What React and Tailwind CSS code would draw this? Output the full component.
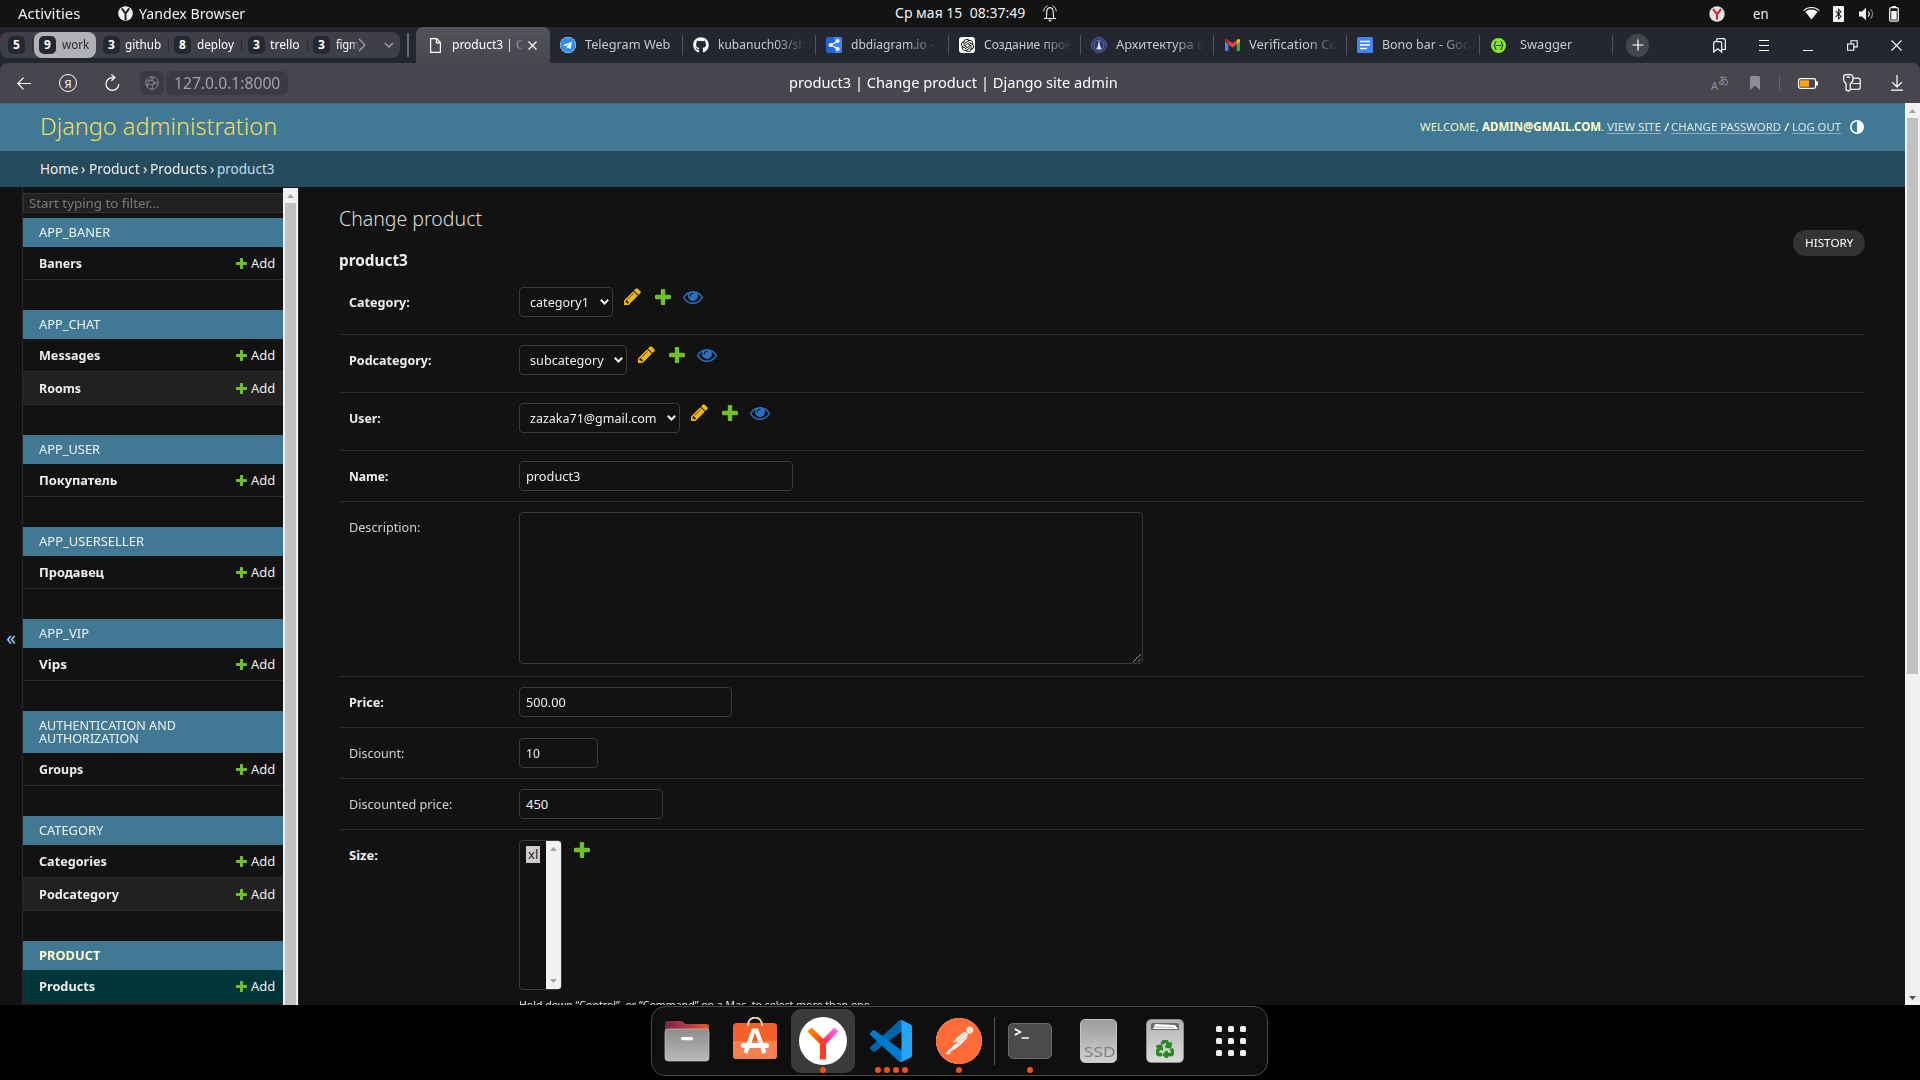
import React, { useLayoutEffect, useRef, useState } from "react";
import { FaGithub, FaRecycle, FaTelegram, FaBluetoothB } from "react-icons/fa";
import { SiOpenai, SiPostman } from "react-icons/si";

/* One line of text squeezed or stretched to an exact width. */
function Fit({ w, className = "", children }) {
  const ref = useRef(null);
  const [k, setK] = useState(1);
  useLayoutEffect(() => {
    const n = ref.current.offsetWidth;
    if (n) setK(w / n);
  }, [w]);
  return (
    <span className={"inline-block shrink-0 whitespace-pre " + className} style={{ width: w }}>
      <span ref={ref} className="inline-block origin-left" style={{ transform: `scaleX(${k})` }}>
        {children}
      </span>
    </span>
  );
}

/* ---------- desktop top bar ---------- */
function TopBar() {
  return (
    <div className="flex h-[27px] items-center bg-[#131313] text-[14px] text-[#f2f2f2]">
      <Fit w={62} className="ml-[18px]">Activities</Fit>
      <svg className="ml-[38px] shrink-0" width="15" height="15" viewBox="0 0 15 15">
        <circle cx="7.5" cy="7.5" r="7.3" fill="#f2f2f2" />
        <path d="M3.8 2.4 7.5 7.6 11.2 2.4M7.5 7v7" stroke="#222" strokeWidth="2" fill="none" />
      </svg>
      <Fit w={106} className="ml-[6px]">Yandex Browser</Fit>
      <Fit w={130} className="ml-[650px] pb-[2px]">{"Ср мая 15  08:37:49"}</Fit>
      <svg className="mb-px ml-[18px] shrink-0" width="14" height="17" viewBox="0 0 14 17" fill="none" stroke="#f2f2f2" strokeWidth="1.1">
        <path d="M1 13.500h12M3 13.300C4 11 3.400 8 4 5.500 4.500 3.200 5.500 2.600 7 2.600s2.500.600 3 2.900c.600 2.500 0 5.500 1 7.800" />
        <path d="M.800 6.500C.800 4 2 2 4.500.700M13.200 6.500c0-2.500-1.200-4.500-3.700-5.800" strokeWidth=".9" />
        <path d="M5.200 14.800h3.600L7 16.900z" fill="#f2f2f2" stroke="none" />
      </svg>
      <svg className="ml-[652px] shrink-0" width="16" height="16" viewBox="0 0 16 16">
        <circle cx="8" cy="8" r="7.7" fill="#e4e4e4" />
        <path d="M4 3.2 8 8.2l4-5M8 8v5.6" stroke="#d01c1c" strokeWidth="1.9" fill="none" />
      </svg>
      <Fit w={16} className="ml-[28px]">en</Fit>
      <svg className="ml-[34px] shrink-0" width="17" height="13" viewBox="0 0 17 13">
        <path d="M.6 3.6a11.5 11.5 0 0 1 15.8 0" fill="none" stroke="#f2f2f2" strokeWidth="1.1" />
        <path d="M2.3 4.8a9.5 9.5 0 0 1 12.4 0L8.5 12.5z" fill="#f2f2f2" />
      </svg>
      <span className="ml-[13px] flex h-4 w-[11px] shrink-0 items-center justify-center rounded-[1px] bg-[#f2f2f2] text-[12px] text-[#131313]">
        <FaBluetoothB />
      </span>
      <svg className="ml-[15px] shrink-0" width="16" height="14" viewBox="0 0 16 14">
        <path d="M0 4.5h3L7 .8v12.4L3 9.5H0z" fill="#f2f2f2" />
        <path d="M9.2 4.4a4 4 0 0 1 0 5.2" fill="none" stroke="#f2f2f2" strokeWidth="1.1" />
        <path d="M11.6 2.2a7 7 0 0 1 0 9.6" fill="none" stroke="#8a8a8a" strokeWidth="1.1" />
      </svg>
      <svg className="ml-[14px] shrink-0" width="10" height="16" viewBox="0 0 10 16">
        <rect x="3" y="0" width="4" height="2" fill="#f2f2f2" />
        <rect x=".7" y="1.7" width="8.6" height="13.4" rx="1.4" fill="none" stroke="#f2f2f2" strokeWidth="1.3" />
        <rect x="2.3" y="5" width="5.4" height="8.6" fill="#f2f2f2" />
      </svg>
    </div>
  );
}

/* ---------- tab strip ---------- */
function Chip({ children, className }) {
  return (
    <span className={"flex h-[18px] w-[17px] shrink-0 items-center justify-center rounded-[5px] bg-[#262830] text-[12px] font-bold text-white " + className}>
      {children}
    </span>
  );
}
const Bar = ({ className }) => <span className={"h-[14px] w-px shrink-0 bg-[#2b2c34] " + className} />;
const FADE = "[mask-image:linear-gradient(to_right,#000_65%,transparent)]";

const ICONS = {
  telegram: (
    <span className="h-4 w-4 overflow-hidden rounded-full bg-white text-[16px] text-[#2f8fee]"><FaTelegram /></span>
  ),
  github: <FaGithub className="text-[16px] text-white" />,
  db: (
    <svg width="16" height="16" viewBox="0 0 16 16">
      <rect width="16" height="16" rx="2" fill="#2264dc" />
      <path d="M8 0h6a2 2 0 0 1 2 2v12a2 2 0 0 1-2 2H9z" fill="#3d84f5" />
      <path d="M12 4 5 8l7 4" stroke="#fff" fill="none" strokeWidth="1.4" />
      <circle cx="4.6" cy="8" r="2" fill="#fff" /><circle cx="11.6" cy="4" r="1.9" fill="#fff" /><circle cx="11.6" cy="12" r="1.9" fill="#fff" />
    </svg>
  ),
  openai: (
    <span className="flex h-4 w-4 items-center justify-center rounded-[3px] bg-white text-[13px] text-black"><SiOpenai /></span>
  ),
  arch: (
    <svg width="16" height="16" viewBox="0 0 16 16">
      <circle cx="8" cy="8" r="7.4" fill="#27356f" stroke="#5567a8" />
      <circle cx="8" cy="8" r="5" fill="none" stroke="#7c8ac0" strokeWidth=".7" />
      <path d="M8 2.6 9 8.4l1.6 3.8H5.4L7 8.4z" fill="#e8ecf8" />
    </svg>
  ),
  gmail: (
    <svg width="15" height="12" viewBox="0 0 15 12">
      <path d="M0 2v9a1 1 0 0 0 1 1h2.4V4.5z" fill="#4285f4" />
      <path d="M15 2v9a1 1 0 0 1-1 1h-2.4V4.5z" fill="#34a853" />
      <path d="M11.6 1.2V5.6L15 3V1.5C15 0 13.4 -.4 12.4.5z" fill="#fbbc04" />
      <path d="M3.4 1.2 7.5 4.3l4.1-3.1v4.4L7.5 8.7 3.4 5.6z" fill="#ea4335" />
      <path d="M0 1.5V3l3.4 2.6V1.2L2.6.5C1.5-.4 0 .2 0 1.5z" fill="#c5221f" />
    </svg>
  ),
  docs: (
    <svg width="16" height="16" viewBox="0 0 16 16">
      <rect width="16" height="16" rx="1.5" fill="#4285f4" />
      <path d="M3 4.5h10M3 8h10M3 11.5h7" stroke="#fff" strokeWidth="1.7" />
    </svg>
  ),
  swagger: (
    <svg width="15" height="15" viewBox="0 0 15 15">
      <circle cx="7.5" cy="7.5" r="7.5" fill="#85ea2d" />
      <path d="M5.6 3.6c-1.600 0-1.500.700-1.500 1.700 0 1.200 0 2-1.300 2.200 1.300.200 1.300 1 1.300 2.200 0 1-.100 1.700 1.500 1.700M9.400 3.600c1.600 0 1.500.700 1.500 1.700 0 1.200 0 2 1.300 2.200-1.300.200-1.300 1-1.300 2.200 0 1 .100 1.700-1.500 1.700M5.200 7.500h4.800" fill="none" stroke="#1c3a1a" strokeWidth="1.1" />
    </svg>
  ),
};

const TABS = [
  ["telegram", "Telegram Web", 85, "w-[133px]", false],
  ["github", "kubanuch03/sh", 88, "w-[133px]", true],
  ["db", "dbdiagram.io - ", 86, "w-[133px]", true],
  ["openai", "Создание прое", 88, "w-[132px]", true],
  ["arch", "Архитектура в", 88, "w-[133px]", true],
  ["gmail", "Verification Co", 88, "w-[133px]", true],
  ["docs", "Bono bar - Goo", 88, "w-[133px]", true],
  ["swagger", "Swagger", 52, "w-[133px]", false],
];

function TabStrip() {
  return (
    <div className="flex h-[36px] items-center bg-[#252730] text-[13px] text-[#c9c9cd]">
      <div className="flex h-[26px] w-[400px] shrink-0 items-center rounded-[8px] bg-[#3f3f4a] text-white">
        <Chip className="ml-[8px]">5</Chip>
        <Bar className="ml-[7px]" />
        <div className="ml-px flex h-[26px] w-[62px] shrink-0 items-center rounded-[8px] bg-[#b0b0b5] text-[#2b2b31]">
          <Chip className="ml-[5px]">9</Chip>
          <Fit w={27} className="ml-[6px]">work</Fit>
        </div>
        <Chip className="ml-[7px]">3</Chip>
        <Fit w={36} className="ml-[5px]">github</Fit>
        <Bar className="ml-[7px]" />
        <Chip className="ml-[5px]">8</Chip>
        <Fit w={37} className="ml-[6px]">deploy</Fit>
        <Bar className="ml-[7px]" />
        <Chip className="ml-[6px]">3</Chip>
        <Fit w={30} className="ml-[5px]">trello</Fit>
        <Bar className="ml-[7px]" />
        <Chip className="ml-[5px]">3</Chip>
        <Fit w={23} className={"ml-[6px] " + FADE}>figm</Fit>
        <svg className="-ml-px shrink-0" width="9" height="14" viewBox="0 0 9 14" fill="none" stroke="#a5a5ad" strokeWidth="1.2"><path d="m1 1 6 6-6 6" /></svg>
        <svg className="ml-[17px] shrink-0" width="10" height="6" viewBox="0 0 10 6" fill="none" stroke="#a5a5ad" strokeWidth="1.3"><path d="m1 1 4 4 4-4" /></svg>
      </div>
      <span className="ml-[7px] h-6 w-[2px] shrink-0 bg-[#66676f]" />
      <div className="ml-[7px] flex h-[36px] w-[134px] shrink-0 items-center rounded-t-[7px] bg-gradient-to-b from-[#53535c] to-[#47464f] text-white">
        <svg className="ml-[14px] shrink-0" width="11" height="15" viewBox="0 0 11 15" fill="none" stroke="#fff" strokeWidth="1.2"><path d="M.6.6h6L10.4 4.6v9.7H.6zM6.5.6v4.2h4" /></svg>
        <Fit w={72} className={"ml-[11px] [mask-image:linear-gradient(to_right,#000_78%,transparent)]"}>product3 | C</Fit>
        <svg className="ml-[4px] shrink-0" width="9" height="9" viewBox="0 0 9 9" stroke="#fff" strokeWidth="1.2"><path d="m.5.5 8 8m0-8-8 8" /></svg>
      </div>
      {TABS.map(([icon, label, w, cls, fade]) => (
        <div key={label} className={"flex h-[20px] shrink-0 items-center border-r border-[#50515a] " + cls}>
          <span className="ml-[10px] flex w-[16px] shrink-0 items-center justify-center">{ICONS[icon]}</span>
          <Fit w={w} className={(icon === "swagger" ? "ml-[14px] " : "ml-[9px] ") + (fade ? FADE : "")}>{label}</Fit>
        </div>
      ))}
      <span className="ml-[13px] flex h-[23px] w-[23px] shrink-0 items-center justify-center rounded-full bg-[#45454e]">
        <svg width="12" height="12" viewBox="0 0 12 12" stroke="#fff" strokeWidth="1.2"><path d="M6 .5v11M.5 6h11" /></svg>
      </span>
      <svg className="ml-[64px] shrink-0" width="13" height="15" viewBox="0 0 13 15" fill="none" stroke="#fff" strokeWidth="1.2">
        <path d="M.7 14V5.2a1.5 1.5 0 0 1 1.5-1.5h5a1.5 1.5 0 0 1 1.5 1.5V14L4.7 10.8zM3.6 3.5V2A1.3 1.3 0 0 1 5 .7h5.8A1.5 1.5 0 0 1 12.3 2v9.5H9" />
      </svg>
      <svg className="ml-[33px] shrink-0" width="10" height="11" viewBox="0 0 10 11" stroke="#fff" strokeWidth="1"><path d="M0 .5h10M0 5.5h10M0 10.5h10" /></svg>
      <svg className="ml-[34px] shrink-0" width="10" height="11" viewBox="0 0 10 11" stroke="#fff" strokeWidth="1"><path d="M0 10.5h10" /></svg>
      <svg className="ml-[34px] shrink-0" width="11" height="11" viewBox="0 0 11 11" fill="none" stroke="#fff" strokeWidth="1.1"><path d="M.6 4h6.2v6.200H.6zM4 4V.7h6.2v6.2H7" /></svg>
      <svg className="ml-[33px] shrink-0" width="11" height="11" viewBox="0 0 11 11" stroke="#fff" strokeWidth="1.1"><path d="m.5.5 10 10m0-10-10 10" /></svg>
    </div>
  );
}

function Toolbar() {
  return (
    <div className="bg-[#252730]">
      <div className="flex h-[40px] items-center rounded-t-[8px] bg-[#47464f] text-[15px] text-white">
        <svg className="ml-[17px] shrink-0" width="14" height="13" viewBox="0 0 14 13" fill="none" stroke="#fff" strokeWidth="1.2"><path d="M14 6.5H1M6.5.7.8 6.5l5.7 5.8" /></svg>
        <span className="ml-[28px] flex h-[18px] w-[18px] shrink-0 items-center justify-center rounded-full border border-white text-[11px] leading-none">Я</span>
        <svg className="ml-[28px] shrink-0" width="15" height="18" viewBox="0 0 15 18" fill="none" stroke="#fff" strokeWidth="1.2"><path d="M13.8 10A6.4 6.4 0 1 1 7.400 3.600h2.200M6.400.5l3.400 3-3.400 3.200" /></svg>
        <span className="ml-[20px] flex h-[24px] w-[24px] shrink-0 items-center justify-center rounded-[6px] bg-[#3a3a43]">
          <svg width="14" height="14" viewBox="0 0 14 14" fill="none" stroke="#878792" strokeWidth="1"><circle cx="7" cy="7" r="6.3" /><path d="M1 5.500c4-3 9-.500 11.500 4M2.500 11.500C2 7 5 2.500 10 1.500M6 .800c3 3.500 3 8.500.500 12.500M.800 8.500c4 1 9 0 12-3.500" /></svg>
        </span>
        <span className="ml-[2px] flex h-[24px] w-[122px] shrink-0 items-center rounded-[6px] bg-[#3a3a43] text-[15.5px] text-[#a1a1a9]">
          <Fit w={106} className="ml-[8px] pt-px">127.0.0.1:8000</Fit>
        </span>
        <Fit w={329} className="ml-[501px] pb-px">product3 | Change product | Django site admin</Fit>
        <span className="ml-[593px] flex w-[17px] shrink-0 items-center text-[#91919a]">
          <span className="mt-[5px] text-[11px] leading-none">A</span>
          <span className="mb-[5px] font-['Noto_Sans_CJK_JP',sans-serif] text-[11px] leading-none">あ</span>
        </span>
        <svg className="ml-[22px] shrink-0" width="10" height="14" viewBox="0 0 10 14"><path d="M0 1.500A1.500 1.500 0 0 1 1.500 0h7A1.500 1.500 0 0 1 10 1.500V14L5 9.500 0 14z" fill="#8e8e96" /></svg>
        <span className="ml-[19px] h-4 w-px shrink-0 bg-[#65656d]" />
        <svg className="ml-[18px] shrink-0" width="20" height="11" viewBox="0 0 20 11"><rect x=".6" y=".6" width="17" height="9.8" rx="1.8" fill="none" stroke="#fff" strokeWidth="1.2" /><rect x="18" y="3.5" width="2" height="4" fill="#fff" /><rect x="2" y="2.2" width="9" height="6.6" rx=".8" fill="#ffa60a" /></svg>
        <svg className="ml-[25px] shrink-0" width="18" height="18" viewBox="0 0 18 18" fill="none" stroke="#fff" strokeWidth="1.2">
          <path d="M3 9.500v6.300l2.300 1.500 2-1.500V9.500C9.500 8.500 10 7 10 5.300V3.200A2.500 2.500 0 0 0 7.500.700H3A2.500 2.500 0 0 0 .600 3.200v2.100C.600 7 1.400 8.500 3 9.500zM3.500 3.200h3.700M10.300 4.200h5A1.800 1.800 0 0 1 17.200 6v7.500a1.800 1.800 0 0 1-1.800 1.800H8M9.500 9.500h7.500" />
        </svg>
        <svg className="ml-[30px] shrink-0" width="12" height="16" viewBox="0 0 12 16" fill="none" stroke="#fff" strokeWidth="1.2"><path d="M6 0v12M1.200 7.300 6 12l4.800-4.700M0 15.200h12" /></svg>
      </div>
    </div>
  );
}

/* ---------- admin icons ---------- */
const PLUS = "M1600 796v192q0 40-28 68t-68 28h-416v416q0 40-28 68t-68 28H800q-40 0-68-28t-28-68v-416H288q-40 0-68-28t-28-68V796q0-40 28-68t68-28h416V284q0-40 28-68t68-28h192q40 0 68 28t28 68v416h416q40 0 68 28t28 68z";
const Plus = ({ size, className = "" }) => (
  <svg className={"shrink-0 " + className} width={size} height={size} viewBox="192 188 1408 1408"><path d={PLUS} fill="#70bf2b" /></svg>
);
const Pencil = () => (
  <svg className="shrink-0" width="17" height="17" viewBox="128 128 1536 1536">
    <path fill="#efb80b" d="M491 1536l91-91-235-235-91 91v107h128v128zm523-928q0-22-22-22-10 0-17 7l-542 542q-7 7-7 17 0 22 22 22 10 0 17-7l542-542q7-7 7-17zm-54-192l416 416-832 832H128v-416zm683 96q0 53-37 90l-166 166-416-416 166-165q36-38 90-38 53 0 91 38l235 234q37 39 37 91z" />
  </svg>
);
const Eye = () => (
  <svg className="shrink-0" width="20" height="13" viewBox="0 384 1792 1152">
    <path fill="#2b70bf" d="M1664 960q-152-236-381-353 61 104 61 225 0 185-131.500 316.500T896 1280t-316.500-131.500T448 832q0-121 61-225-229 117-381 353 133 205 333.500 326.500T896 1408t434.500-121.500T1664 960zM944 576q0-20-14-34t-34-14q-125 0-214.500 89.500T592 832q0 20 14 34t34 14 34-14 14-34q0-86 61-147t147-61q20 0 34-14t14-34zm848 384q0 34-20 69-140 230-376.500 368.500T896 1536t-499.500-139T20 1029Q0 994 0 960t20-69q140-229 376.500-368T896 384t499.500 139T1772 891q20 35 20 69z" />
  </svg>
);
const Tri = ({ down }) => (
  <svg className="shrink-0" width="7" height="4" viewBox="0 0 7 4"><path d={down ? "M0 0h7L3.500 4z" : "M0 4h7L3.500 0z"} fill="#a3a3a3" /></svg>
);

/* ---------- sidebar ---------- */
const APPS = [
  ["APP_BANER", 71, [["Baners", 43]]],
  ["APP_CHAT", 62, [["Messages", 61], ["Rooms", 42]]],
  ["APP_USER", 61, [["Покупатель", 78]]],
  ["APP_USERSELLER", 105, [["Продавец", 65]]],
  ["APP_VIP", 50, [["Vips", 28]]],
  ["AUTHENTICATION AND", 137, [["Groups", 44]], ["AUTHORIZATION", 100]],
  ["CATEGORY", 64, [["Categories", 68], ["Podcategory", 80]]],
  ["PRODUCT", 61, [["Products", 56], ["Sizes", 30]]],
];

function Sidebar() {
  return (
    <div className="flex h-full w-[300px] shrink-0 overflow-hidden">
      <div className="flex h-full w-[23px] shrink-0 items-center justify-center border-r border-[#2a2a2a] pb-[6px] pr-[4px] text-[19px] text-[#81d4fa]">
        <span className="mt-[90px] pl-1">«</span>
      </div>
      <div className="h-full w-[260px] shrink-0 overflow-hidden pt-[6px]">
        <div className="flex h-[20px] items-center border border-[#343434] border-r-0 bg-[#212121] pl-[5px] text-[12.500px] text-[#7a7a7a]">
          <Fit w={130} className="pt-[2px]">Start typing to filter…</Fit>
        </div>
        {APPS.map(([name, w, models, second], i) => {
          const current = name === "PRODUCT";
          return (
            <div key={name} className={i === 0 ? "mt-[5px] mb-[30px]" : "mb-[30px]"}>
              <div className={"flex flex-col items-start bg-[#417893] pl-[16px] pt-[8px] text-[12px] leading-[13px] " + (second ? "h-[42px] " : "h-[29px] ") + (current ? "font-bold text-[#ffffcc]" : "text-[#f0f4f6]")}>
                <Fit w={w} className="h-[13px]">{name}</Fit>
                {second && <Fit w={second[1]} className="h-[13px]">{second[0]}</Fit>}
              </div>
              {models.map(([m, mw], j) => (
                <div key={m} className={"flex h-[33px] items-center border-b border-[#2a2a2a] pl-[16px] pr-[8px] text-[13px] text-[#eeeeee] " + (current && j === 0 ? "bg-[#00363a]" : j % 2 ? "bg-[#212121]" : "")}>
                  <Fit w={mw} className="pt-[2px] font-bold">{m}</Fit>
                  <Plus size={11} className="ml-auto" />
                  <Fit w={24} className="ml-[4px] pt-[2px]">Add</Fit>
                </div>
              ))}
            </div>
          );
        })}
      </div>
      <div className="mt-px flex w-[15px] shrink-0 flex-col items-center bg-[#f1f1f1]">
        <span className="flex h-[15px] items-center"><Tri /></span>
        <span className="w-[11px] flex-1 bg-[#c1c1c1]" />
      </div>
      <div className="w-px shrink-0 bg-[#2a2a2a]" />
    </div>
  );
}

/* ---------- form ---------- */
function Row({ label, lw, bold, h, children, last }) {
  return (
    <div className={"flex items-start pl-[10px] pt-[10px] text-[13px] " + h + (last ? "" : " border-b border-[#2a2a2a]")}>
      <div className="flex h-[30px] w-[170px] shrink-0 items-center pt-[2px]">
        <Fit w={lw} className={bold ? "font-bold text-[#eeeeee]" : "text-[#d2d2d2]"}>{label}</Fit>
      </div>
      {children}
    </div>
  );
}
function Select({ value, tw, cls }) {
  return (
    <>
      <div className={"flex h-[30px] shrink-0 items-center rounded-[4px] border border-[#3a3a3a] pl-[10px] text-[#eeeeee] " + cls}>
        <Fit w={tw} className="pt-[2px]">{value}</Fit>
        <svg className="ml-auto mr-[3px] shrink-0" width="9" height="6" viewBox="0 0 9 6" fill="none" stroke="#eee" strokeWidth="2"><path d="m.8.8 3.700 3.700L8.200.8" /></svg>
      </div>
      <div className="ml-[11px] mt-px flex h-[17px] items-center gap-[14px]">
        <Pencil />
        <Plus size={16} />
        <span className="-ml-[2px] pt-[2px]"><Eye /></span>
      </div>
    </>
  );
}
const Input = ({ value, tw, cls }) => (
  <div className={"flex h-[30px] items-center rounded-[4px] border border-[#3a3a3a] pl-[6px] text-[#eeeeee] " + cls}>
    <Fit w={tw} className="pt-[2px]">{value}</Fit>
  </div>
);

function Main() {
  return (
    <div className="min-w-0 flex-1 overflow-hidden pl-[39px] pr-[40px] pt-[19px]">
      <div className="flex h-[71px] items-start justify-between">
        <div className="flex flex-col">
          <Fit w={143} className="h-[26px] text-[19.500px] font-light leading-[26px] text-[#dddddd]">Change product</Fit>
          <Fit w={69} className="mt-[17px] h-[22px] text-[16px] font-bold leading-[22px] text-[#eeeeee]">product3</Fit>
        </div>
        <div className="mt-[24px] flex h-[26px] w-[72px] items-center justify-center rounded-full bg-[#333333] text-[11px] text-white">
          <Fit w={48}>HISTORY</Fit>
        </div>
      </div>
      <Row label="Category:" lw={61} bold h="h-[58px]"><Select value="category1" tw={59} cls="w-[94px]" /></Row>
      <Row label="Podcategory:" lw={83} bold h="h-[58px]"><Select value="subcategory" tw={74} cls="w-[108px]" /></Row>
      <Row label="User:" lw={32} bold h="h-[58px]"><Select value="zazaka71@gmail.com" tw={127} cls="w-[161px]" /></Row>
      <Row label="Name:" lw={39} bold h="h-[51px]"><Input value="product3" tw={54} cls="w-[274px]" /></Row>
      <Row label="Description:" lw={71} h="h-[175px]">
        <div className="flex h-[152px] w-[624px] items-end justify-end rounded-[4px] border border-[#3a3a3a] p-px">
          <svg width="8" height="8" viewBox="0 0 8 8" stroke="#9a9a9a" strokeWidth="1"><path d="M0 8 8 0M4.500 8 8 4.500" /></svg>
        </div>
      </Row>
      <Row label="Price:" lw={35} bold h="h-[51px]"><Input value="500.00" tw={40} cls="w-[213px]" /></Row>
      <Row label="Discount:" lw={55} h="h-[51px]"><Input value="10" tw={14} cls="w-[79px]" /></Row>
      <Row label="Discounted price:" lw={103} h="h-[51px]"><Input value="450" tw={22} cls="w-[144px]" /></Row>
      <Row label="Size:" lw={29} bold h="h-[190px]" last>
        <div className="flex flex-col">
          <div className="flex">
            <div className="flex h-[150px] w-[43px] justify-between overflow-hidden rounded-[4px] border border-[#3a3a3a]">
              <span className="ml-[6px] mt-[5px] flex h-[17px] w-[14px] items-center justify-center bg-[#cccccc] text-[#222233]"><Fit w={10}>xl</Fit></span>
              <span className="flex w-[15px] flex-col items-center justify-between bg-[#f1f1f1] py-[6px]"><Tri /><Tri down /></span>
            </div>
            <Plus size={16} className="ml-[12px] mt-[2px]" />
          </div>
          <Fit w={354} className="mt-[7px] text-[11px] leading-[16px] text-[#e0e0e0]">Hold down “Control”, or “Command” on a Mac, to select more than one.</Fit>
        </div>
      </Row>
    </div>
  );
}

const LINK = "border-b border-[#8fb0c0] text-[#dde6ea] h-[15px]";
function Page() {
  return (
    <div className="flex h-[902px] bg-[#121212]">
      <div className="flex w-[1905px] shrink-0 flex-col">
        <div className="flex h-[48px] shrink-0 items-center border-t border-[#43677c] bg-[#417893] pb-[3px] pl-[40px]">
          <Fit w={237} className="text-[23.500px] font-light leading-[30px] text-[#f5dd5d]">Django administration</Fit>
          <div className="ml-[1143px] flex items-center text-[11.500px] leading-[15px] text-[#ffffcc]">
            <Fit w={59} className="text-[#eef3cb]">WELCOME,</Fit>
            <Fit w={119} className="ml-[3px] font-bold">ADMIN@GMAIL.COM</Fit>
            <Fit w={3}>.</Fit>
            <Fit w={54} className={"ml-[3px] " + LINK}>VIEW SITE</Fit>
            <Fit w={5} className="ml-[3px]">/</Fit>
            <Fit w={110} className={"ml-[2px] " + LINK}>CHANGE PASSWORD</Fit>
            <Fit w={5} className="ml-[3px]">/</Fit>
            <Fit w={49} className={"ml-[3px] " + LINK}>LOG OUT</Fit>
            <svg className="ml-[9px] mt-px" width="14" height="14" viewBox="0 0 14 14"><circle cx="7" cy="7" r="6.2" fill="none" stroke="#fff" strokeWidth="1.5" /><path d="M7 .5a6.500 6.500 0 0 1 0 13z" fill="#fff" /></svg>
          </div>
        </div>
        <div className="flex h-[36px] shrink-0 items-center bg-[#264b5d] pl-[40px] text-[13.500px] text-[#eeeeee]">
          <Fit w={38}>Home</Fit><Fit w={4} className="ml-[3px]">›</Fit>
          <Fit w={51} className="ml-[4px]">Product</Fit><Fit w={4} className="ml-[3px]">›</Fit>
          <Fit w={57} className="ml-[3px]">Products</Fit><Fit w={4} className="ml-[3px]">›</Fit>
          <Fit w={58} className="ml-[3px] text-[#bfdcea]">product3</Fit>
        </div>
        <div className="flex h-[818px] overflow-hidden">
          <Sidebar />
          <Main />
        </div>
      </div>
      <div className="flex w-[15px] flex-col items-center bg-[#f1f1f1]">
        <span className="flex h-[15px] items-center"><Tri /></span>
        <span className="h-[556px] w-[11px] bg-[#c1c1c1]" />
        <span className="mt-auto flex h-[15px] items-center text-[#505050]">
          <svg width="7" height="4" viewBox="0 0 7 4"><path d="M0 0h7L3.500 4z" fill="#505050" /></svg>
        </span>
      </div>
    </div>
  );
}

/* ---------- dock ---------- */
function DockItem({ cls, dots = 0, active, children }) {
  return (
    <div className={"flex h-[64px] shrink-0 flex-col items-center rounded-[10px] " + cls + (active ? " bg-[#3a3a3a]" : "")}>
      <div className="flex h-[58px] items-center pt-[5px]">{children}</div>
      <div className="flex gap-[3px]">
        {Array.from({ length: dots }, (_, i) => <span key={i} className="h-[6px] w-[6px] rounded-full bg-[#e95420]" />)}
      </div>
    </div>
  );
}

function Dock() {
  return (
    <div className="flex h-[75px] justify-center bg-black pr-px pt-px">
      <div className="flex h-[70px] w-[617px] items-center rounded-[14px] border border-[#4a4a4a] bg-[#0f0f0f] pl-[3px]">
        <DockItem cls="w-[64px]">
          <svg width="46" height="48" viewBox="0 0 46 48">
            <defs>
              <linearGradient id="fo"><stop offset="0" stopColor="#7b2352" /><stop offset="1" stopColor="#e9552a" /></linearGradient>
              <linearGradient id="fg" x2="0" y2="1"><stop offset="0" stopColor="#8d8d8d" /><stop offset="1" stopColor="#b9b9b9" /></linearGradient>
            </defs>
            <path d="M1 24V7a3 3 0 0 1 3-3h13q2 0 3 1.500L21.500 7H42a3 3 0 0 1 3 3v14z" fill="url(#fo)" />
            <rect x="1" y="12" width="44" height="32" rx="3" fill="url(#fg)" stroke="#c4c4c4" strokeWidth=".7" />
            <rect x="17" y="20" width="12" height="3.2" rx="1.5" fill="#fff" />
          </svg>
        </DockItem>
        <DockItem cls="ml-[4px] w-[64px]">
          <svg width="46" height="48" viewBox="0 0 46 48">
            <rect x="1" y="6" width="44" height="36" rx="3.5" fill="#f4602a" />
            <path d="M1 24h44v14.500a3.500 3.500 0 0 1-3.500 3.500h-37A3.500 3.500 0 0 1 1 38.500z" fill="#f58150" />
            <path d="M16 9V8a7 7.500 0 0 1 14 0v1" fill="none" stroke="#f6dfa8" strokeWidth="1.8" />
            <path d="M13.500 36 21.500 13.500h3L32.500 36" fill="none" stroke="#fff" strokeWidth="4.2" />
            <rect x="9" y="26" width="28" height="5" rx="2.5" fill="#fff" />
          </svg>
        </DockItem>
        <DockItem cls="ml-[4px] w-[64px]" dots={1} active>
          <svg width="48" height="48" viewBox="0 0 48 48">
            <defs>
              <linearGradient id="y1" x2="1" y2="1"><stop offset="0" stopColor="#ff8a00" /><stop offset="1" stopColor="#ff3d1f" /></linearGradient>
              <linearGradient id="y2" x1="1" x2="0" y2="1"><stop offset="0" stopColor="#ff6bf0" /><stop offset="1" stopColor="#ff2d55" /></linearGradient>
            </defs>
            <circle cx="24" cy="24" r="24" fill="#fff" />
            <path d="M37.500 12.500 24 26" stroke="url(#y2)" strokeWidth="6" />
            <path d="M10.500 12.500 24 26" stroke="url(#y1)" strokeWidth="6" />
            <path d="M24 23v19.500" stroke="#ff3b24" strokeWidth="6" />
          </svg>
        </DockItem>
        <DockItem cls="ml-[4px] w-[64px]" dots={4}>
          <svg width="42" height="42" viewBox="0 0 100 100">
            <path d="M96.500 10.700 75.900.8a6.200 6.200 0 0 0-7.100 1.200L1.300 63.600a4.200 4.200 0 0 0 0 6.200l5.500 5a4.200 4.200 0 0 0 5.300.2L93.400 13.400c2.700-2 6.600-.1 6.600 3.300v-.3c0-2.400-1.400-4.600-3.500-5.700z" fill="#0065a9" />
            <path d="M96.500 89.300 75.900 99.200a6.200 6.200 0 0 1-7.100-1.200L1.300 36.400a4.200 4.200 0 0 1 0-6.200l5.500-5a4.200 4.200 0 0 1 5.300-.2l81.300 61.600c2.700 2 6.600.1 6.600-3.300v.3c0 2.400-1.400 4.600-3.500 5.700z" fill="#007acc" />
            <path d="M75.900 99.200a6.200 6.200 0 0 1-7.100-1.200c2.300 2.300 6.200.7 6.200-2.600V4.600c0-3.300-3.900-4.900-6.200-2.600A6.200 6.200 0 0 1 75.900.8l20.600 9.900c2.100 1 3.500 3.200 3.500 5.600v67.400c0 2.400-1.400 4.600-3.500 5.600z" fill="#25a4f3" />
          </svg>
        </DockItem>
        <DockItem cls="ml-[4px] w-[64px]" dots={1}>
          <span className="flex h-[46px] w-[46px] items-center justify-center rounded-full bg-white text-[46px] text-[#ff6c37]"><SiPostman /></span>
        </DockItem>
        <span className="ml-[3px] h-[48px] w-px shrink-0 bg-[#555]" />
        <DockItem cls="ml-[3px] w-[64px]" dots={1}>
          <div className="flex h-[36px] w-[44px] items-start rounded-[5px] border border-[#6b6b6b] bg-[#4b4b4b] pl-[5px] pt-[4px]">
            <svg width="16" height="12" viewBox="0 0 16 12" fill="none" stroke="#fff" strokeWidth="1.7"><path d="m.8 1 5.500 3L.8 7M7.500 10H15" /></svg>
          </div>
        </DockItem>
        <DockItem cls="ml-[4px] w-[64px]">
          <div className="flex h-[44px] w-[37px] items-end justify-center rounded-[5px] border border-[#c4c4c4] bg-gradient-to-b from-[#9c9c9c] to-[#d0d0d0] pb-[2px] pl-[3px] text-[15px] leading-[18px] text-[#808080]">
            <Fit w={31}>SSD</Fit>
          </div>
        </DockItem>
        <DockItem cls="ml-[3px] w-[64px]">
          <div className="flex h-[44px] w-[38px] flex-col items-center rounded-[5px] border border-[#8f8f8f] bg-gradient-to-b from-[#b4b4b4] to-[#dadada] pt-[2px]">
            <svg className="shrink-0" width="30" height="8" viewBox="0 0 30 8"><path d="M1 8V3a2 2 0 0 1 2-2h24a2 2 0 0 1 2 2v5z" fill="#6a6a6a" /><path d="m3 7 2-5 20 1 3 4z" fill="#fff" /><path d="m4 5 20 .5" stroke="#999" strokeWidth=".7" /></svg>
            <FaRecycle className="mt-[10px] shrink-0 text-[18px] text-[#26891f]" stroke="#26891f" strokeWidth="36" />
          </div>
        </DockItem>
        <DockItem cls="ml-[2px] w-[64px]">
          <div className="grid grid-cols-3 gap-[6px]">
            {Array.from({ length: 9 }, (_, i) => <span key={i} className="h-[6px] w-[6px] rounded-[1.5px] bg-[#f0f0f0]" />)}
          </div>
        </DockItem>
      </div>
    </div>
  );
}

export default function App() {
  return (
    <div className="flex h-[1080px] w-[1920px] flex-col overflow-hidden bg-black font-['Noto_Sans','Open_Sans',sans-serif]">
      <TopBar />
      <TabStrip />
      <Toolbar />
      <Page />
      <Dock />
    </div>
  );
}
